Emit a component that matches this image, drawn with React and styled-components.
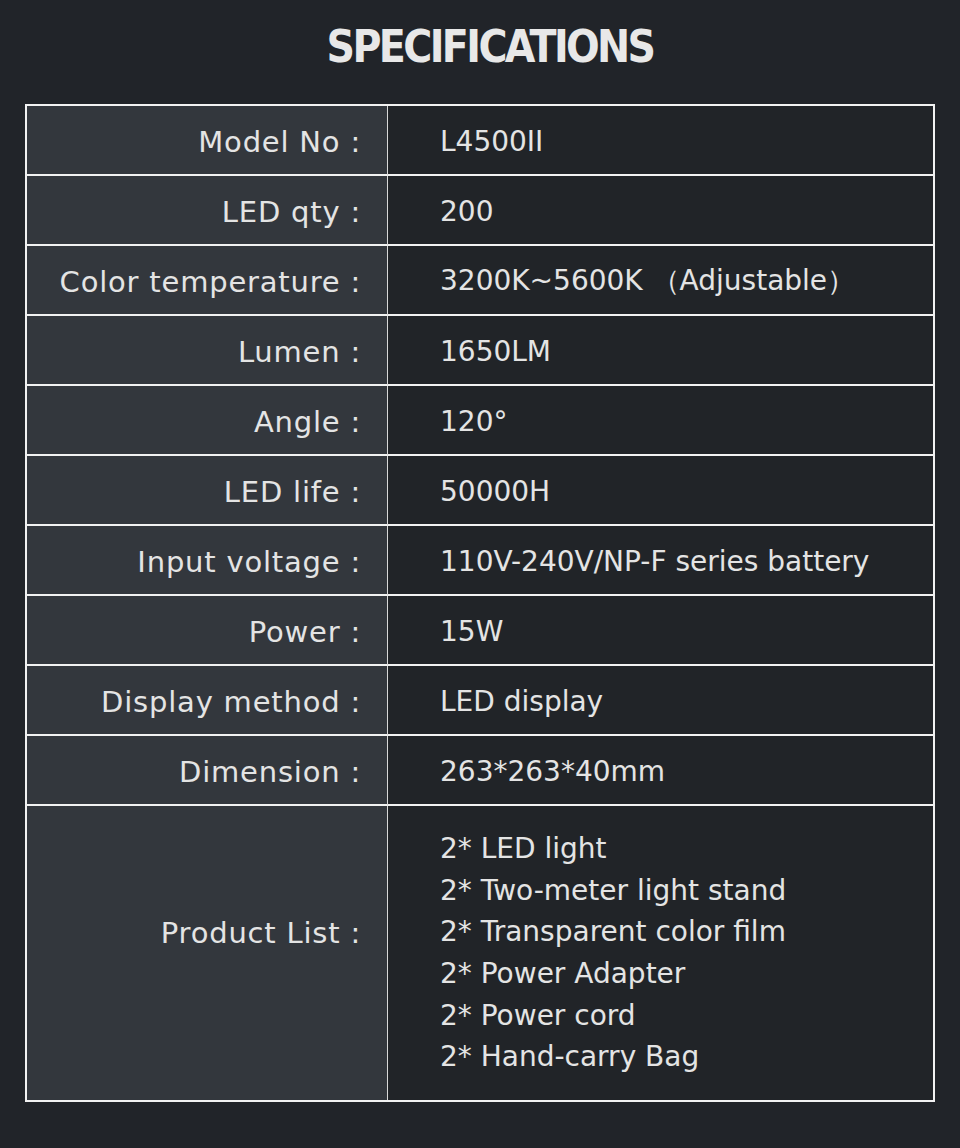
import styled, { createGlobalStyle } from 'styled-components'

const GlobalStyle = createGlobalStyle`
  html, body {
    margin: 0;
    padding: 0;
    background: #212429;
  }
`

const Page = styled.div`
  width: 960px;
  height: 1148px;
  background: #212429;
  font-family: 'DejaVu Sans', sans-serif;
  color: #e4e4e4;
  padding-top: 24px;
  box-sizing: border-box;
`

const Title = styled.h1`
  margin: 0;
  height: 56px;
  padding-left: 20px;
  text-align: center;
  font-family: 'DejaVu Sans Condensed', 'DejaVu Sans', sans-serif;
  font-size: 44px;
  font-weight: bold;
  letter-spacing: -2.6px;
  line-height: 46px;
  color: #e8e8e8;
`

const Table = styled.div`
  margin: 24px 0 0 25px;
  width: 910px;
  box-sizing: border-box;
  border: 2px solid #f2f2f2;
  display: grid;
  grid-template-columns: 361px 1fr;
`

const Label = styled.div`
  height: ${p => p.tall ? '294px' : '70px'};
  background: #33373d;
  border-right: 1px solid #d8d8d8;
  border-bottom: ${p => p.last ? 'none' : '2px solid #f2f2f2'};
  display: flex;
  align-items: center;
  justify-content: flex-end;
  padding: ${p => p.tall ? '0 26px 40px 0' : '4px 26px 0 0'};
  box-sizing: border-box;
  font-size: 29px;
  letter-spacing: 0.8px;
  white-space: nowrap;
`

const Value = styled.div`
  height: ${p => p.tall ? '294px' : '70px'};
  background: #212428;
  border-bottom: ${p => p.last ? 'none' : '2px solid #f2f2f2'};
  display: flex;
  flex-direction: column;
  justify-content: center;
  padding: ${p => p.tall ? '0 0 0 52px' : '2px 0 0 52px'};
  box-sizing: border-box;
  font-size: 28px;
  white-space: nowrap;
`

const Item = styled.div`
  line-height: 41.6px;
`

const rows = [
  ['Model No :', 'L4500II'],
  ['LED qty :', '200'],
  ['Color temperature :', '3200K~5600K （Adjustable）'],
  ['Lumen :', '1650LM'],
  ['Angle :', '120°'],
  ['LED life :', '50000H'],
  ['Input voltage :', '110V-240V/NP-F series battery'],
  ['Power :', '15W'],
  ['Display method :', 'LED display'],
  ['Dimension :', '263*263*40mm'],
]

const products = [
  '2* LED light',
  '2* Two-meter light stand',
  '2* Transparent color film',
  '2* Power Adapter',
  '2* Power cord',
  '2* Hand-carry Bag',
]

export default function App() {
  return (
    <Page>
      <GlobalStyle />
      <Title>SPECIFICATIONS</Title>
      <Table>
        {rows.map(([k, v]) => (
          <>
            <Label key={k + 'l'}>{k}</Label>
            <Value key={k + 'v'}>{v}</Value>
          </>
        ))}
        <Label tall last>Product List :</Label>
        <Value tall last>
          {products.map(p => <Item key={p}>{p}</Item>)}
        </Value>
      </Table>
    </Page>
  )
}
